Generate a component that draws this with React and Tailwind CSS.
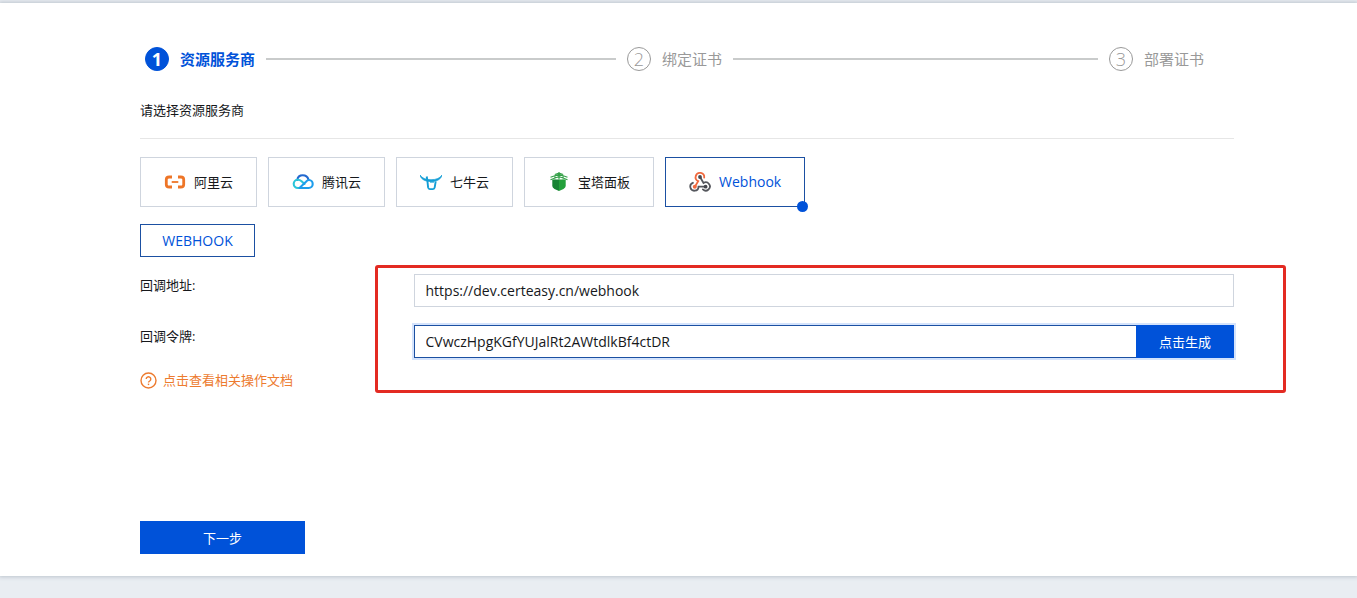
import { useState } from 'react'

const STEPS = ['资源服务商', '绑定证书', '部署证书']

const PROVIDERS = [
  { id: 'aliyun', name: '阿里云', Icon: AliyunIcon },
  { id: 'tencent', name: '腾讯云', Icon: TencentIcon },
  { id: 'qiniu', name: '七牛云', Icon: QiniuIcon },
  { id: 'baota', name: '宝塔面板', Icon: BaotaIcon },
  { id: 'webhook', name: 'Webhook', Icon: WebhookIcon },
]

const TOKEN_CHARS = 'ABCDEFGHIJKLMNOPQRSTUVWXYZabcdefghijklmnopqrstuvwxyz0123456789'

function randomToken(length = 30) {
  return Array.from({ length }, () => TOKEN_CHARS[Math.floor(Math.random() * TOKEN_CHARS.length)]).join('')
}

export default function App() {
  const [provider, setProvider] = useState('webhook')
  const [url, setUrl] = useState('https://dev.certeasy.cn/webhook')
  const [token, setToken] = useState('CVwczHpgKGfYUJalRt2AWtdlkBf4ctDR')

  return (
    <div className="min-h-screen bg-[#e9edf2] pt-[3px] font-['Open_Sans','Noto_Sans_CJK_SC',sans-serif] text-[13px] leading-[22px] text-[#16181b]">
      <main className="bg-white pt-11 pr-[123px] pb-[22px] pl-[140px] shadow-[0_0_4px_1px_#bcc4cd]">
        <Stepper current={0} />

        <h2 className="mt-7 border-b border-[#e6e6e6] pb-[17px]">请选择资源服务商</h2>

        <div className="mt-[18px] flex flex-wrap gap-[11px]">
          {PROVIDERS.map(({ id, name, Icon }) => {
            const active = provider === id
            return (
              <button
                key={id}
                type="button"
                aria-pressed={active}
                onClick={() => setProvider(id)}
                className={`relative flex h-[50px] items-center gap-2 border px-[23px] ${active ? 'border-[#1b50a2] text-sm text-[#0052d9]' : 'border-[#cfd5de]'}`}
              >
                <Icon />
                {name}
                {active && <span className="absolute -right-1 -bottom-1.5 size-[11px] rounded-full bg-[#0052d9]" />}
              </button>
            )
          })}
        </div>

        <button type="button" className="mt-[17px] block h-[33px] w-[115px] border border-[#1b50a2] text-sm text-[#0052d9]">
          WEBHOOK
        </button>

        <form onSubmit={(e) => e.preventDefault()}>
          <div className="relative mt-[17px] flex flex-col gap-[18px]">
            <Field id="url" label="回调地址:">
              <input
                id="url"
                type="text"
                value={url}
                onChange={(e) => setUrl(e.target.value)}
                className="block h-[33px] w-full border border-[#cfd5de] px-[11px] text-sm outline-none"
              />
            </Field>
            <Field id="token" label="回调令牌:">
              <div className="flex h-[33px] shadow-[0_0_0_2px_#d4e3fc]">
                <input
                  id="token"
                  type="text"
                  value={token}
                  onChange={(e) => setToken(e.target.value)}
                  className="min-w-0 flex-1 border border-r-0 border-[#1b50a2] px-[11px] text-sm outline-none"
                />
                <button type="button" onClick={() => setToken(randomToken())} className="w-[98px] bg-[#0052d9] text-white">
                  点击生成
                </button>
              </div>
            </Field>
            {/* highlight around the callback fields */}
            <div className="pointer-events-none absolute -top-[9px] -right-[52px] -bottom-[35px] left-[calc(25%-39px)] rounded-[3px] border-3 border-[#e32a22]" />
          </div>

          <a href="#docs" className="mt-[11px] flex w-fit items-center gap-1.5 text-[#ed7b2f]">
            <HelpIcon />
            点击查看相关操作文档
          </a>

          <button type="submit" className="mt-[130px] block h-[33px] w-[165px] bg-[#0052d9] text-white">
            下一步
          </button>
        </form>
      </main>
    </div>
  )
}

function Stepper({ current }) {
  return (
    <ol className="flex pl-[5px] text-[15px] leading-6">
      {STEPS.map((title, i) => {
        const active = i === current
        const last = i === STEPS.length - 1
        return (
          <li
            key={title}
            className={`flex items-center gap-[11px] ${last ? 'w-[125px]' : 'flex-1 pr-[11px]'} ${active ? 'font-bold text-[#0052d9]' : 'text-[#999]'}`}
          >
            <span
              className={`flex size-6 items-center justify-center rounded-full border text-lg leading-none ${active ? 'border-[#0052d9] bg-[#0052d9] text-white' : 'border-[#999] font-light'}`}
            >
              {i + 1}
            </span>
            <span>{title}</span>
            {!last && <span className="h-0.5 flex-1 bg-[#c9cbcb]" />}
          </li>
        )
      })}
    </ol>
  )
}

function Field({ id, label, children }) {
  return (
    <div className="grid grid-cols-4">
      <label htmlFor={id}>{label}</label>
      <div className="col-span-3">{children}</div>
    </div>
  )
}

function HelpIcon() {
  return (
    <svg viewBox="0 0 17 17" className="size-[17px]" fill="none" stroke="currentColor" strokeWidth="1.4">
      <circle cx="8.5" cy="8.5" r="7.5" />
      <path d="M6.200 7a2.300 2.300 0 1 1 3.500 2c-.9.5-1.200.8-1.200 1.600" />
      <path d="M8.500 11.600v1.500" />
    </svg>
  )
}

function AliyunIcon() {
  return (
    <svg viewBox="0 0 22 22" className="size-[22px]" fill="none" stroke="#ee7527" strokeWidth="2.8">
      <path d="M8 6H5.200Q2.300 6 2.300 8.600v4.800q0 2.600 2.900 2.600H8M14 6h2.800q2.900 0 2.900 2.600v4.800q0 2.600-2.900 2.600H14" />
      <path d="M7.700 11h6.600" strokeWidth="1.800" />
    </svg>
  )
}

function TencentIcon() {
  return (
    <svg viewBox="0 0 22 22" className="size-[22px]" fill="none" strokeWidth="2.100" strokeLinecap="round">
      <path d="M5.300 8.900C5.800 5.900 8 4.300 10.700 4.300c2.800 0 5 1.600 5.800 4.300" stroke="#2469cf" />
      <path d="M12.500 13 9.600 10.200C8.500 9.200 7.200 8.700 5.800 8.700 3.500 8.700 1.700 10.500 1.700 12.800s1.800 4.200 4.200 4.200h2" stroke="#2bc5d9" />
      <path d="M7.500 17 14 10.700c1-1.100 1.900-1.700 3-1.700 2.100 0 3.700 1.800 3.700 4s-1.700 4-4 4z" stroke="#1d9dec" strokeLinejoin="round" />
    </svg>
  )
}

function QiniuIcon() {
  return (
    <svg viewBox="0 0 22 22" className="size-[22px]" fill="none" stroke="#149ed6">
      <path d="M0 4c.9 3.900 4.300 6.500 11 6.500S21.100 7.900 22 4c-1.900 3-5.500 4.700-11 4.700S1.900 7 0 4z" fill="#149ed6" strokeWidth=".7" />
      <path d="M6.700 5.500 7.300 9l.8 7.400q.3 1.700 1.700 1.700h3.200q1.400 0 1.700-1.700l1-6" strokeWidth="1.900" />
      <path d="M10 11h4" strokeWidth="1.200" />
    </svg>
  )
}

function BaotaIcon() {
  return (
    <svg viewBox="0 0 22 22" className="size-[22px]">
      <path d="M4.300 8.500H11V20l-4.500-2.100q-2.200-1-2.200-2.800z" fill="#178334" />
      <path d="M11 8.500h6.700v6.600q0 1.800-2.200 2.800L11 20z" fill="#23a03b" />
      <path d="M2.500 8.800 11 5.500l8.500 3.300M2.500 6.300 11 3.300l8.500 3M6.800 3.400 11 2l4.200 1.400M11 1v7.500M7 5v3.500M15 5v3.500" fill="none" stroke="#33a047" strokeWidth="1.100" />
    </svg>
  )
}

function WebhookIcon() {
  return (
    <svg viewBox="0 0 22 22" className="size-[22px]" fill="none" strokeWidth="1.800" strokeLinecap="round">
      <path d="m6 15.500 3.200-5.400A4.300 4.300 0 1 1 15.200 6.600" stroke="#f0693e" />
      <path d="m11.200 6.300 3.300 5.700a4.100 4.100 0 1 1-.6 6.400" stroke="#55575d" />
      <path d="M3.900 11.800A4.100 4.100 0 1 0 9.500 15.700H16" stroke="#55575d" />
      <circle cx="11" cy="6" r="1.900" fill="#45474d" />
      <circle cx="5.800" cy="15.700" r="2" fill="#f0693e" />
      <circle cx="16.600" cy="15.700" r="1.900" fill="#45474d" />
    </svg>
  )
}
